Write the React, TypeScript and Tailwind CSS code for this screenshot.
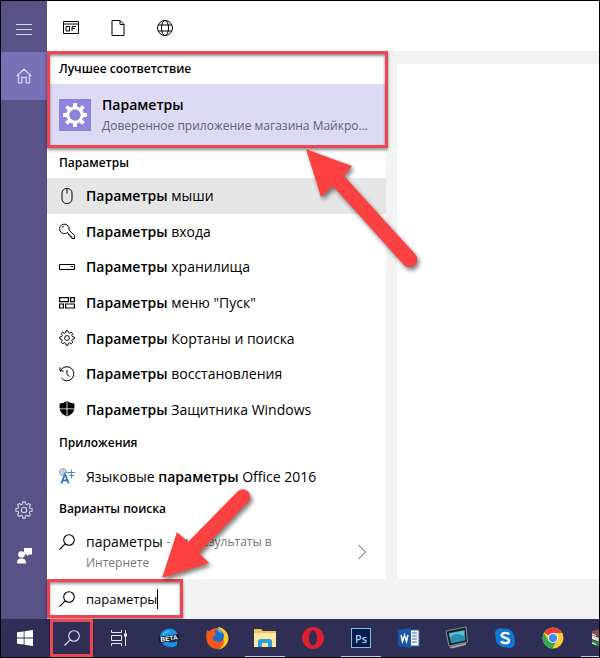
import { useState } from "react";
import type { ReactNode } from "react";

const GEAR =
  "M8.7 1h2.6l.4 2.3 1.6.7 2-1.3 1.9 1.9-1.3 2 .7 1.6 2.4.5v2.6l-2.4.4-.7 1.6 1.3 2-1.9 1.9-2-1.3-1.6.7-.4 2.4H8.7l-.4-2.4-1.6-.7-2 1.3-1.9-1.9 1.3-2-.7-1.6L1 11.3V8.7l2.4-.5.7-1.6-1.3-2L4.7 2.7l2 1.3 1.6-.7z";

function Icon({
  children,
  className = "size-4",
  box = 16,
}: {
  children: ReactNode;
  className?: string;
  box?: number;
}) {
  return (
    <svg
      viewBox={`0 0 ${box} ${box}`}
      className={`shrink-0 ${className}`}
      fill="none"
      stroke="currentColor"
      aria-hidden="true"
    >
      {children}
    </svg>
  );
}

function GearIcon({ className = "size-[18px]" }: { className?: string }) {
  return (
    <Icon box={20} className={className}>
      <path d={GEAR} strokeWidth="1.2" />
      <circle cx="10" cy="10" r="3" strokeWidth="1.2" />
    </Icon>
  );
}

function SearchIcon({ className = "size-4" }: { className?: string }) {
  return (
    <Icon className={className}>
      <circle cx="10" cy="6" r="5.3" strokeWidth="1.1" />
      <path d="M6.2 9.8L.5 15.5" strokeWidth="1.1" />
    </Icon>
  );
}

const settings = [
  {
    rest: "мыши",
    icon: (
      <Icon>
        <rect x="3" y=".5" width="10" height="15" rx="4.5" />
        <path d="M8 .5v5" />
      </Icon>
    ),
  },
  {
    rest: "входа",
    icon: (
      <Icon>
        <path d="M8.500 9.500A4.800 4.800 0 1 1 10 7l5.500 5.500v3h-2.700v-1.800h-1.700V12H9.800z" />
        <circle cx="4" cy="3.800" r=".8" fill="currentColor" stroke="none" />
      </Icon>
    ),
  },
  {
    rest: "хранилища",
    icon: (
      <Icon>
        <path d="M.5 5.500h15v5H.5zM12 7.500h2" />
      </Icon>
    ),
  },
  {
    rest: 'меню "Пуск"',
    icon: (
      <Icon>
        <path
          d="M.6 2.600h8.800v4H.6zM11.600 2.600h3.800v4h-3.800zM.6 9h3.800v4H.6zM6.600 9h8.800v4H6.600z"
          strokeWidth="1.2"
        />
      </Icon>
    ),
  },
  { rest: "Кортаны и поиска", icon: <GearIcon className="size-4" /> },
  {
    rest: "восстановления",
    icon: (
      <Icon>
        <path d="M1.500 4.700A7 7 0 1 1 2.300 12M1 1.300v3.700h3.700M8 4v4.500l2.500 2" />
      </Icon>
    ),
  },
  {
    rest: "Защитника Windows",
    icon: (
      <Icon>
        <path
          d="M7.600 0v7.500H.6V2.500C3.400 2.500 6 1.500 7.600 0zM8.400 0C10 1.500 12.600 2.500 15.400 2.500v5h-7zM.7 8.300h6.900v7.200C4 13.700 1.300 11.700.7 8.300zM8.400 8.300h6.900c-.6 3.400-3.300 5.400-6.900 7.200z"
          fill="currentColor"
          stroke="none"
        />
      </Icon>
    ),
  },
];

function SectionTitle({ children }: { children: ReactNode }) {
  return (
    <h2 className="flex h-[30px] shrink-0 items-center px-3 text-[12px] font-semibold">
      {children}
    </h2>
  );
}

const tasks = [
  {
    name: "Пуск",
    open: false,
    icon: (
      <svg viewBox="0 0 16 16" className="size-4" fill="#fff">
        <path d="M0 2.300L6.700 1.400v6.200H0zM7.500 1.300L16 0v7.600H7.500zM0 8.400h6.700v6.200L0 13.700zM7.500 8.400H16V16l-8.500-1.200z" />
      </svg>
    ),
  },
  { name: "Поиск", open: false, icon: <SearchIcon className="size-4 text-[#e4e4f0]" /> },
  {
    name: "Представление задач",
    open: false,
    icon: (
      <Icon className="size-4 text-[#e4e4f0]">
        <path d="M.5 0v2.500h10V0M.5 5.500h10v5H.5zM.5 16v-2.500h10V16M14.500 0v16" />
        <path d="M13 3.500h3v3h-3z" fill="currentColor" stroke="none" />
      </Icon>
    ),
  },
  {
    name: "Edge Beta",
    open: false,
    icon: (
      <svg viewBox="0 0 22 22" className="size-[22px]">
        <path
          d="M2 9.500C3 4.500 7 1.500 11.500 1.500c5.500 0 8.500 4 8.500 9.500H8c0 3 2.500 4.500 5.500 4.500 2 0 4-.5 5.500-1.500v4.200c-2 1.500-5 2.300-8 1.800-5-.8-8.500-4.500-9-10.500z"
          fill="#1595e6"
        />
        <path d="M5 8c1.500-2.500 4-3.500 6.500-3.200" stroke="#7fd0ff" fill="none" />
        <path d="M.5 10l20-3 1 6-20 3z" fill="#0c1a2e" />
        <text
          x="2.500"
          y="13.700"
          fontSize="6.500"
          fontWeight="700"
          fill="#fff"
          transform="rotate(-8 11 12)"
          fontFamily="Liberation Sans, sans-serif"
        >
          BETA
        </text>
      </svg>
    ),
  },
  {
    name: "Firefox",
    open: false,
    icon: (
      <svg viewBox="0 0 24 24" className="size-6">
        <circle cx="12" cy="12.500" r="10.500" fill="#f4581f" />
        <path d="M13 1c7 1 10.500 6 10.500 12-1 6-5 10-11 10.500 5-2 7-6 6-11-1-5-4-6-5.500-11.500z" fill="#ffc928" />
        <circle cx="13" cy="10" r="6" fill="#1a6fc4" />
        <path d="M2 4l4 2.500c2-1 4-.5 5 1L9.500 9.500 7.500 11c1 5 5 6 9 4-1 4-5 6-9 5C2 18 0 11 2 4z" fill="#f4581f" />
        <path d="M12 2c3 1 5 3 5 6l-4-3z" fill="#45b4f0" />
      </svg>
    ),
  },
  {
    name: "Проводник",
    open: true,
    icon: (
      <svg viewBox="0 0 24 24" className="size-6">
        <path d="M1 3h7l2 2h13v16H1z" fill="#f0c65a" />
        <path d="M1 7h22v14H1z" fill="#fce9a5" />
        <path d="M5 21v-5.500c0-1.500 1-2.500 2.500-2.500h9c1.500 0 2.500 1 2.500 2.500V21h-4v-4H9v4z" fill="#2f9fe0" />
      </svg>
    ),
  },
  {
    name: "Opera",
    open: false,
    icon: (
      <svg viewBox="0 0 24 24" className="size-6">
        <path
          d="M12 1a11 11 0 1 0 0 22 11 11 0 0 0 0-22zm0 3.500c2.500 0 4 3.500 4 7.500s-1.500 7.500-4 7.500S8 16 8 12s1.500-7.500 4-7.500z"
          fill="#e0202e"
          fillRule="evenodd"
        />
      </svg>
    ),
  },
  {
    name: "Photoshop",
    open: true,
    icon: (
      <span className="flex size-5 items-center justify-center border border-[#7fbdf0] bg-[#071c48] text-[11px] leading-none font-semibold text-[#9dd3ff]">
        Ps
      </span>
    ),
  },
  {
    name: "Word",
    open: false,
    icon: (
      <svg viewBox="0 0 22 22" className="size-[22px]">
        <path d="M12 3h9v16h-9z" fill="#fff" stroke="#2b67b5" />
        <path d="M14 6h5M14 9h5M14 12h5M14 15h5" stroke="#2b67b5" />
        <path d="M0 3l13-2v20L0 19z" fill="#1857a4" />
        <path d="M3 8l1.500 6.500L6.500 8l2 6.500L10 8" stroke="#fff" strokeWidth="1.4" fill="none" />
      </svg>
    ),
  },
  {
    name: "Монитор",
    open: false,
    icon: (
      <svg viewBox="0 0 24 24" className="size-6">
        <path d="M1 5l20-4 1.500 15L4 20z" fill="#171b22" stroke="#8b8f96" />
        <path d="M4 7l15.500-3 1 10.500L6 17.500z" fill="#278fae" />
        <path d="M5 12c4-5 8-5 14-2l.5-5.500L4 7.500z" fill="#5cc0cf" />
        <path d="M4 21l17-4v2L7 22.500z" fill="#a8a39a" />
      </svg>
    ),
  },
  {
    name: "Skype",
    open: false,
    icon: (
      <svg viewBox="0 0 22 22" className="size-[22px]">
        <circle cx="11" cy="11" r="9.500" fill="#0f78d4" />
        <circle cx="6.500" cy="6.500" r="5.500" fill="#0f78d4" />
        <circle cx="15.500" cy="15.500" r="5.500" fill="#0f78d4" />
        <path
          d="M15 7.500C14 5.500 8 5 7.700 8.200c0 3.300 7.300 2 7.300 5.300 0 3.500-6.500 3.200-7.800.6"
          stroke="#fff"
          strokeWidth="2.4"
          fill="none"
        />
      </svg>
    ),
  },
  {
    name: "Chrome",
    open: false,
    icon: (
      <svg viewBox="0 0 22 22" className="size-[22px]">
        <circle cx="11" cy="11" r="10.500" fill="#f9cf35" />
        <path d="M11 11L2 5.500a10.500 10.500 0 0 1 18.200.5H11z" fill="#e6443a" />
        <path d="M1.900 5.800A10.500 10.500 0 0 0 10.500 21.500l4-7.500H6.500z" fill="#36a853" />
        <circle cx="11" cy="11" r="5" fill="#fff" />
        <circle cx="11" cy="11" r="4" fill="#4285f4" />
      </svg>
    ),
  },
  {
    name: "WinRAR",
    open: true,
    icon: (
      <svg viewBox="0 0 20 20" className="size-5">
        <path d="M1 3l9-2 9 3v3L9 9 1 6z" fill="#8d5147" />
        <path d="M1 7l8 3 10-3v4L9 14 1 11z" fill="#d9d3c6" />
        <path d="M1 12l8 3 10-3v4L9 19l-8-3z" fill="#3f8a55" />
        <path d="M1 6l4 1.500M1 10l4 1.500M1 15l4 1.500" stroke="#fff" />
      </svg>
    ),
  },
];

export default function App() {
  const [query, setQuery] = useState("параметры");

  return (
    <div className="relative flex h-screen flex-col overflow-hidden border border-black bg-[#f3f3f3] font-['Open_Sans','Noto_Sans',sans-serif] text-black">
      <div className="flex min-h-0 flex-1">
        {/* Side rail */}
        <nav className="flex w-[46px] shrink-0 flex-col bg-[#585287] text-[#d8d5f0]">
          <button aria-label="Меню" className="flex h-[51px] items-center justify-center pt-1">
            <Icon>
              <path d="M0 3.500h16M0 8.500h16M0 13.500h16" />
            </Icon>
          </button>
          <button aria-label="Главная" className="flex h-12 items-center justify-center bg-[#7971b8]">
            <Icon>
              <path
                d="M.8 8L8 1.200 15.200 8M2.500 6.500v8.300h3.300V9.500h4.400v5.300h3.300V6.500"
                strokeWidth="1.3"
              />
            </Icon>
          </button>
          <button aria-label="Настройки" className="mt-auto flex h-[46px] items-center justify-center">
            <GearIcon />
          </button>
          <button aria-label="Отзыв" className="mb-10 flex h-[46px] items-center justify-center text-white">
            <Icon>
              <path
                d="M8 0h8v6.500h-3L11 8.500v-2H8zM1 15.500c0-4 2-5 4.500-5s4.500 1 4.500 5z"
                fill="currentColor"
                stroke="none"
              />
              <circle cx="5.500" cy="6.500" r="3.300" fill="currentColor" stroke="none" />
            </Icon>
          </button>
        </nav>

        <div className="flex min-w-0 flex-1 flex-col">
          {/* Filters */}
          <header className="flex h-[50px] shrink-0 items-center gap-[31px] bg-white px-4 pt-1">
            <button aria-label="Приложения">
              <Icon>
                <path d="M.5 1.500h15v12H.5zM.5 4h15M3 6.500h3.500v4.500H3zM9 11V6.500h4M9 8.500h3" />
              </Icon>
            </button>
            <button aria-label="Документы">
              <Icon>
                <path d="M2 .5h8l4 4v11H2zM10 .5v4h4" />
              </Icon>
            </button>
            <button aria-label="Интернет">
              <Icon>
                <circle cx="8" cy="8" r="7.500" />
                <ellipse cx="8" cy="8" rx="3.500" ry="7.500" />
                <path d="M1.500 5h13M1.500 11h13" />
              </Icon>
            </button>
          </header>

          <div className="flex min-h-0 flex-1">
            {/* Results */}
            <main className="flex w-[339px] shrink-0 flex-col bg-white">
              <section className="relative pt-[3px] pb-[3px]">
                <SectionTitle>Лучшее соответствие</SectionTitle>
                <button className="flex h-[61px] w-full items-center gap-[11px] bg-[#dcdbf3] px-3 text-left">
                  <span className="flex size-8 shrink-0 items-center justify-center bg-[#8e84dc] text-white">
                    <Icon box={24} className="size-6">
                      <circle cx="12" cy="12" r="7.200" strokeWidth="3" />
                      <path
                        d="M12 0v5M12 19v5M0 12h5M19 12h5M3.500 3.500l3.600 3.600M16.900 16.900l3.600 3.600M20.500 3.500l-3.600 3.600M7.100 16.900l-3.600 3.600"
                        strokeWidth="3.8"
                      />
                    </Icon>
                  </span>
                  <span className="whitespace-nowrap">
                    <span className="block text-[14px] leading-[22px] font-semibold">Параметры</span>
                    <span className="block text-[12px] leading-5 text-[#626277]">
                      Доверенное приложение магазина Майкро...
                    </span>
                  </span>
                </button>
                <div className="pointer-events-none absolute inset-0 -mr-0.5 border-[3px] border-[#ee4453] shadow-[0_2px_3px_rgba(0,0,0,0.45),inset_0_2px_3px_rgba(0,0,0,0.45)]" />
              </section>

              <SectionTitle>Параметры</SectionTitle>
              <ul className="flex flex-1 flex-col pb-px">
                {settings.map((item, i) => (
                  <li key={item.rest} className="flex flex-1">
                    <button
                      className={`flex flex-1 items-center gap-[11px] px-3 text-left text-[14px] ${
                        i === 0 ? "bg-[#e6e6e6]" : ""
                      }`}
                    >
                      {item.icon}
                      <span>
                        <b className="font-semibold">Параметры</b> {item.rest}
                      </span>
                    </button>
                  </li>
                ))}
              </ul>

              <SectionTitle>Приложения</SectionTitle>
              <button className="flex h-9 shrink-0 items-center gap-[11px] px-3 text-left text-[14px]">
                <Icon className="size-4 text-[#2c70b8]">
                  <path d="M2.200 15.500L6 6l3.800 9.500M3.500 12.300h5" strokeWidth="1.7" />
                  <circle cx="4" cy="4" r="3.300" stroke="#6d8fb5" />
                  <path d="M.7 4h6.600M4 .7v6.600" stroke="#6d8fb5" strokeWidth=".7" />
                  <path d="M8 4.500h8M12.500 1.500v9M10 7.500h5" stroke="#4a88c8" />
                </Icon>
                <span>
                  Языковые <b className="font-semibold">параметры</b> Office 2016
                </span>
              </button>

              <SectionTitle>Варианты поиска</SectionTitle>
              <button className="flex h-[55px] shrink-0 items-center gap-[11px] px-3 text-left">
                <SearchIcon className="mb-5 size-4" />
                <span className="flex flex-col text-[12px] leading-[21px] text-[#767676]">
                  <span className="flex gap-1">
                    <span className="text-[14px] text-black">параметры</span>
                    <span>- см. результаты в</span>
                  </span>
                  <span>Интернете</span>
                </span>
                <Icon className="mr-1 ml-auto size-4 text-[#999]">
                  <path d="M4.500 1l7 7-7 7" strokeWidth="1.2" />
                </Icon>
              </button>
            </main>

            <aside className="mt-[13px] ml-[11px] flex-1 bg-white" />
          </div>

          {/* Search field */}
          <div className="h-10 shrink-0">
            <label className="flex h-[39px] w-[136px] items-center gap-[11px] border-[3px] border-[#ee4453] bg-white px-[9px] shadow-[0_2px_3px_rgba(0,0,0,0.4),inset_0_2px_3px_rgba(0,0,0,0.4)]">
              <SearchIcon />
              <span className="flex items-center">
                <input
                  aria-label="Поиск"
                  value={query}
                  onChange={(e) => setQuery(e.target.value)}
                  className="field-sizing-content h-6 max-w-[84px] bg-transparent text-[13px] leading-6 outline-none"
                />
                <span className="h-5 w-px bg-black" />
              </span>
            </label>
          </div>
        </div>
      </div>

      {/* Taskbar */}
      <footer className="flex h-[38px] shrink-0 overflow-hidden bg-[#2f2f56]">
        {tasks.map((task, i) => (
          <button
            key={task.name}
            aria-label={task.name}
            className={`relative flex shrink-0 items-center justify-center ${
              i < 3 ? "w-[47px]" : "w-12"
            } ${i === 2 ? "mr-[3px]" : ""}`}
          >
            {task.icon}
            {task.open && <span className="absolute inset-x-1 bottom-0 h-px bg-[#c9c9ee]" />}
            {task.name === "Поиск" && (
              <span className="absolute inset-x-0.5 inset-y-0 border-[3px] border-[#ee4453] shadow-[0_1px_3px_rgba(0,0,0,0.4)]" />
            )}
          </button>
        ))}
      </footer>

      {/* Pointers */}
      <svg
        viewBox="0 0 120 124"
        className="pointer-events-none absolute top-[147px] left-[304px] h-[124px] w-[120px] drop-shadow-[2px_3px_2px_rgba(0,0,0,0.5)]"
        fill="#fb4141"
        aria-hidden="true"
      >
        <path d="M1 1l46 17-8 10 71 78a7.500 7.500 0 0 1-11 11L28 38l-12 11z" />
      </svg>
      <svg
        viewBox="0 0 100 100"
        className="pointer-events-none absolute top-[485px] left-[160px] size-[100px] drop-shadow-[2px_3px_2px_rgba(0,0,0,0.5)]"
        fill="#fb4141"
        aria-hidden="true"
      >
        <path d="M1 92l15-46 11 10L77 5a7.500 7.500 0 0 1 11 10L38 67l10 10z" />
      </svg>
    </div>
  );
}
